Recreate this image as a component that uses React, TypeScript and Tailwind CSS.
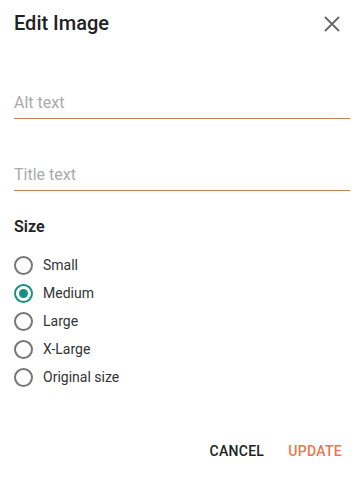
const sizes = ["Small", "Medium", "Large", "X-Large", "Original size"];

export default function App() {
  const selected = "Medium";

  return (
    <div className="h-[477px] w-[364px] bg-white font-['Roboto',sans-serif] text-[#222]">
      <div className="flex items-center justify-between pl-[14px] pr-[24px] pt-[10px]">
        <h2 className="text-[20px] font-medium leading-[26px]">Edit Image</h2>
        <svg viewBox="0 0 16 16" className="mt-[2px] h-[16px] w-[16px] text-[#666]" fill="none" stroke="currentColor" strokeWidth={1.8}>
          <path d="M1 1L15 15M15 1L1 15" />
        </svg>
      </div>

      <div className="px-[14px] pt-[57px]">
        <input
          placeholder="Alt text"
          className="block w-full border-b border-[#c98051] pb-[5px] text-[16px] leading-[20px] outline-none placeholder:text-[#aaa]"
        />
        <input
          placeholder="Title text"
          className="mt-[46px] block w-full border-b border-[#c98051] pb-[5px] text-[16px] leading-[20px] outline-none placeholder:text-[#aaa]"
        />

        <div className="mt-[26px] text-[16px] font-semibold leading-[20px]">Size</div>

        <div className="mt-[14px] flex flex-col">
          {sizes.map((s) => (
            <label key={s} className="flex h-[28px] items-center gap-[10px]">
              <span
                className={
                  s === selected
                    ? "flex h-[19px] w-[19px] items-center justify-center rounded-full border-2 border-[#17907f]"
                    : "flex h-[19px] w-[19px] items-center justify-center rounded-full border-2 border-[#757575]"
                }
              >
                {s === selected && <span className="h-[9px] w-[9px] rounded-full bg-[#17907f]" />}
              </span>
              <span className="text-[14px] text-[#333]">{s}</span>
            </label>
          ))}
        </div>
      </div>

      <div className="mt-[50px] flex justify-end gap-[24px] pr-[22px]">
        <button className="text-[14px] font-medium tracking-[0.3px] text-[#222]">CANCEL</button>
        <button className="text-[14px] font-medium tracking-[0.3px] text-[#e8784f]">UPDATE</button>
      </div>
    </div>
  );
}
